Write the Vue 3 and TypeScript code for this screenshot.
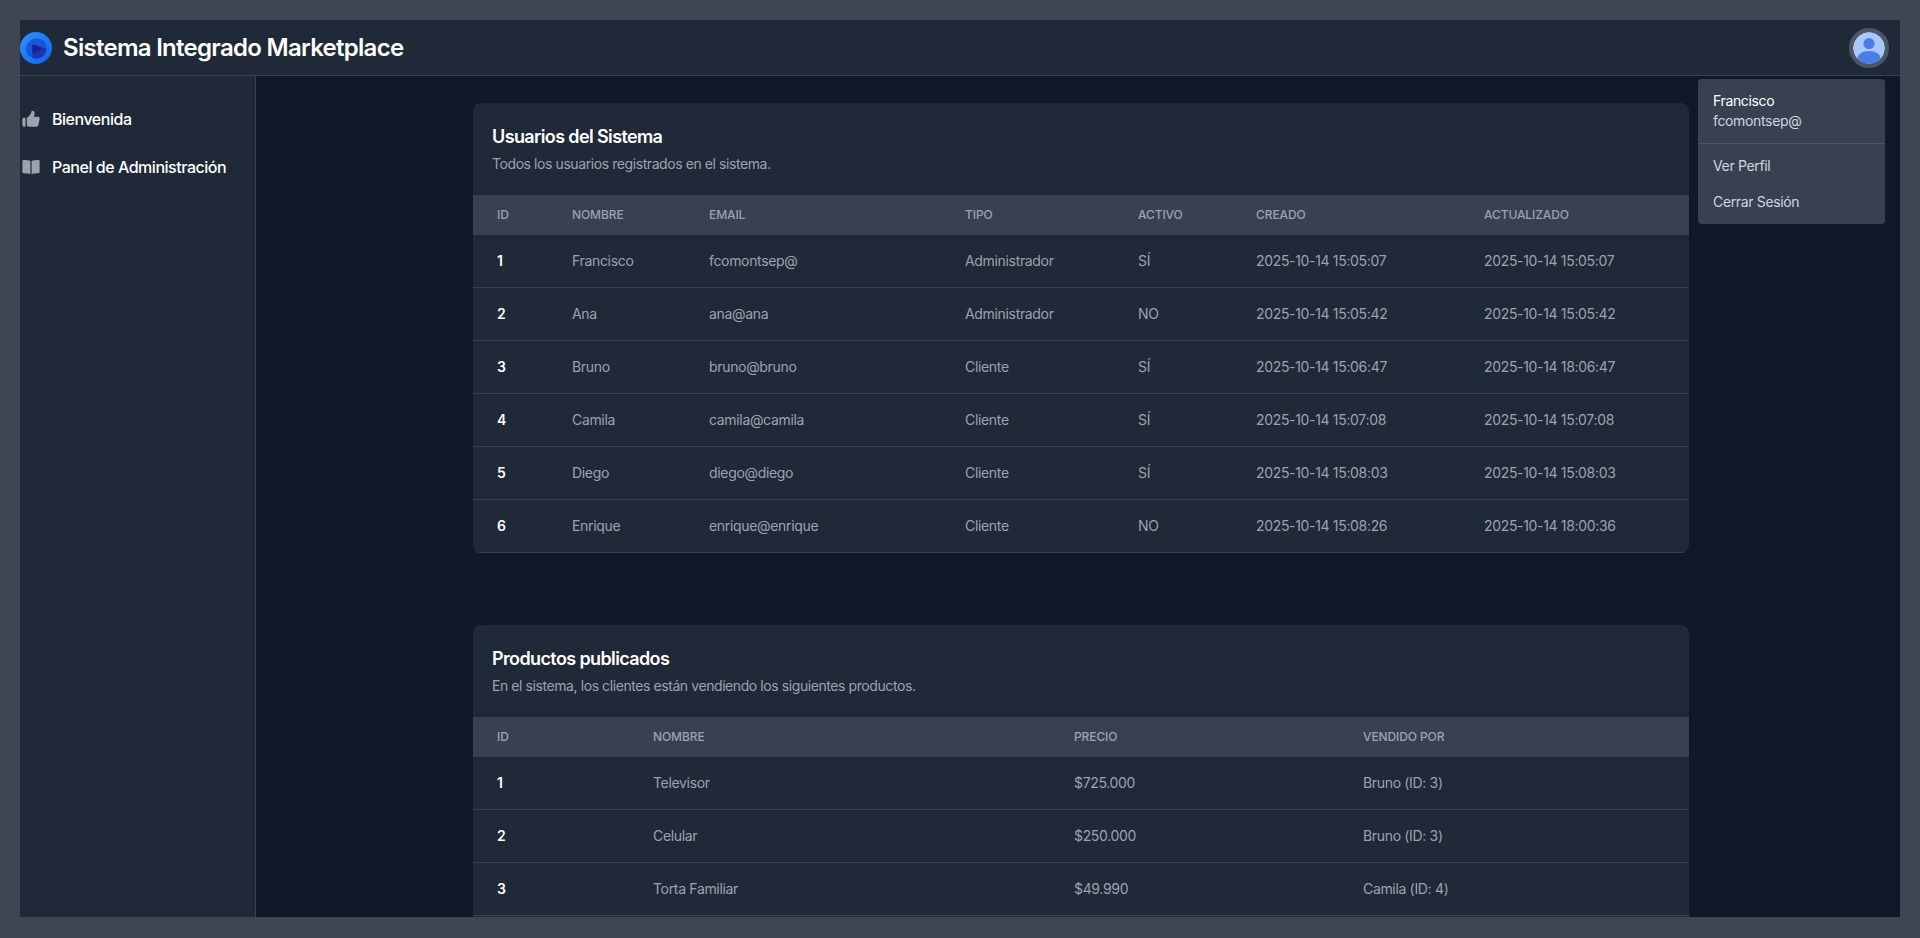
<script setup lang="ts">
interface Table {
  title: string
  subtitle: string
  cols: { label: string; width: number }[]
  rows: string[][]
}

const tables: Table[] = [
  {
    title: 'Usuarios del Sistema',
    subtitle: 'Todos los usuarios registrados en el sistema.',
    cols: [
      { label: 'ID', width: 75 },
      { label: 'Nombre', width: 137 },
      { label: 'Email', width: 256 },
      { label: 'Tipo', width: 173 },
      { label: 'Activo', width: 118 },
      { label: 'Creado', width: 228 },
      { label: 'Actualizado', width: 229 },
    ],
    rows: [
      ['1', 'Francisco', 'fcomontsep@', 'Administrador', 'SÍ', '2025-10-14 15:05:07', '2025-10-14 15:05:07'],
      ['2', 'Ana', 'ana@ana', 'Administrador', 'NO', '2025-10-14 15:05:42', '2025-10-14 15:05:42'],
      ['3', 'Bruno', 'bruno@bruno', 'Cliente', 'SÍ', '2025-10-14 15:06:47', '2025-10-14 18:06:47'],
      ['4', 'Camila', 'camila@camila', 'Cliente', 'SÍ', '2025-10-14 15:07:08', '2025-10-14 15:07:08'],
      ['5', 'Diego', 'diego@diego', 'Cliente', 'SÍ', '2025-10-14 15:08:03', '2025-10-14 15:08:03'],
      ['6', 'Enrique', 'enrique@enrique', 'Cliente', 'NO', '2025-10-14 15:08:26', '2025-10-14 18:00:36'],
    ],
  },
  {
    title: 'Productos publicados',
    subtitle: 'En el sistema, los clientes están vendiendo los siguientes productos.',
    cols: [
      { label: 'ID', width: 156 },
      { label: 'Nombre', width: 421 },
      { label: 'Precio', width: 289 },
      { label: 'Vendido por', width: 350 },
    ],
    rows: [
      ['1', 'Televisor', '$725.000', 'Bruno (ID: 3)'],
      ['2', 'Celular', '$250.000', 'Bruno (ID: 3)'],
      ['3', 'Torta Familiar', '$49.990', 'Camila (ID: 4)'],
      ['', '', '', ''],
    ],
  },
]
</script>

<template>
  <div class="frame">
    <header class="topbar">
      <div class="brand">
        <svg class="logo" viewBox="0 0 32 32" aria-hidden="true">
          <defs>
            <linearGradient id="lg" x1="0" y1="0" x2="1" y2="1">
              <stop offset="0" stop-color="#2f93ff" />
              <stop offset="1" stop-color="#0f62ec" />
            </linearGradient>
          </defs>
          <circle cx="16" cy="16" r="16" fill="url(#lg)" />
          <path d="M6 17C6 11 11 6.500 17 6.500c3.500 0 6.500 1.500 8.500 4L26.500 16.500c0 5.500-4.500 10-10 10-1.500 0-2.800-.3-4-.8C8.500 24 6 21 6 17z" fill="#1a55dc" />
          <path d="M12.500 12.500L26.500 16.500c0 5.500-4.500 10-10 10-1.500 0-2.800-.3-4-.8z" fill="#1c33b4" />
          <path d="M12.500 12.500L22.500 16 12.500 21.500z" fill="#13228f" />
        </svg>
        <span class="brand-name">Sistema Integrado Marketplace</span>
      </div>
      <div class="avatar">
        <svg viewBox="0 0 32 32" aria-hidden="true">
          <circle cx="16" cy="16" r="16" fill="#a8c7fa" />
          <circle cx="16" cy="11.500" r="5.500" fill="#4a7de6" />
          <path d="M4.500 27c0-5 5-8 11.500-8s11.500 3 11.500 8c-3 3-7 5-11.500 5s-8.500-2-11.500-5z" fill="#4a7de6" />
        </svg>
      </div>
      <div class="menu">
        <div class="menu-head">
          <div class="menu-name">Francisco</div>
          <div class="menu-mail">fcomontsep@</div>
        </div>
        <ul class="menu-list">
          <li>Ver Perfil</li>
          <li>Cerrar Sesión</li>
        </ul>
      </div>
    </header>

    <div class="body">
      <aside class="sidebar">
        <a class="nav-item">
          <svg class="nav-icon" viewBox="0 0 24 24" aria-hidden="true">
            <path d="M0.500 12a1.800 1.800 0 0 1 1.800-1.800h1.400a1 1 0 0 1 1 1v10a1 1 0 0 1-1 1H2.300A1.800 1.800 0 0 1 .5 20.400z" />
            <path d="M6.500 10.800c2-1.400 4.200-3.600 5.200-6 .6-1.400.6-3.300 2.100-3.700 1.800-.4 3.100 1.300 3.100 3.200 0 1.700-.6 3.200-1.300 4.700h5.700c1.500 0 2.600 1.400 2.300 2.900l-1.800 8c-.3 1.300-1.500 2.300-2.900 2.300H10.500c-1.700 0-3-.5-4-1.200z" />
          </svg>
          <span>Bienvenida</span>
        </a>
        <a class="nav-item">
          <svg class="nav-icon" viewBox="0 0 24 24" aria-hidden="true">
            <path d="M11.200 4C9 3.200 6 2.800 2 2.800A1.500 1.500 0 0 0 .5 4.300v14.400A1.500 1.500 0 0 0 2 20.200c4 0 7 .4 9.200 1.300z" />
            <path d="M12.800 4C15 3.200 18 2.800 22 2.800a1.500 1.500 0 0 1 1.500 1.500v14.400a1.500 1.500 0 0 1-1.500 1.500c-4 0-7 .4-9.200 1.300z" />
          </svg>
          <span>Panel de Administración</span>
        </a>
      </aside>

      <main class="main">
        <section v-for="t in tables" :key="t.title" class="card">
          <div class="card-head">
            <h2>{{ t.title }}</h2>
            <p>{{ t.subtitle }}</p>
          </div>
          <table>
            <colgroup>
              <col v-for="c in t.cols" :key="c.label" :style="{ width: c.width + 'px' }" />
            </colgroup>
            <thead>
              <tr>
                <th v-for="c in t.cols" :key="c.label">{{ c.label }}</th>
              </tr>
            </thead>
            <tbody>
              <tr v-for="(r, n) in t.rows" :key="n">
                <td v-for="(v, i) in r" :key="i" :class="{ idc: i === 0 }">{{ v }}</td>
              </tr>
            </tbody>
          </table>
        </section>
      </main>
    </div>
  </div>
</template>

<style scoped>
.frame {
  box-sizing: border-box;
  height: 938px;
  padding: 20px 20px 21px;
  background: #3f4651;
  display: flex;
  flex-direction: column;
  overflow: hidden;
  font-family: Inter, "Noto Sans", sans-serif;
  color: #fff;
}
.topbar {
  position: relative;
  flex: none;
  height: 56px;
  box-sizing: border-box;
  background: #1f2937;
  border-bottom: 1px solid #374151;
  display: flex;
  align-items: center;
  justify-content: space-between;
  padding-right: 11px;
}
.brand { display: flex; align-items: center; gap: 11px; }
.logo { width: 32px; height: 32px; display: block; }
.brand-name { font-size: 24px; font-weight: 600; letter-spacing: -0.72px; }
.avatar {
  width: 40px;
  height: 40px;
  box-sizing: border-box;
  border: 4px solid #4b5563;
  border-radius: 50%;
  overflow: hidden;
}
.avatar svg { display: block; width: 32px; height: 32px; }
.menu {
  position: absolute;
  z-index: 2;
  top: 59px;
  right: 15px;
  width: 187px;
  background: #374151;
  border-radius: 4px;
  font-size: 14px;
  line-height: 20px;
}
.menu-head {
  padding: 12px 15px;
  border-bottom: 1px solid #4b5563;
}
.menu-name { color: #fff; letter-spacing: -0.35px; }
.menu-mail { color: #d1d5db; letter-spacing: -0.35px; }
.menu-list { list-style: none; margin: 0; padding: 4px 0; }
.menu-list li { padding: 8px 15px; color: #d1d5db; height: 20px; letter-spacing: -0.35px; }
.body { flex: 1; min-height: 0; display: flex; }
.sidebar {
  flex: none;
  width: 236px;
  box-sizing: border-box;
  background: #1f2937;
  border-right: 1px solid #374151;
  padding-top: 23px;
  display: flex;
  flex-direction: column;
  gap: 8px;
}
.nav-item {
  display: flex;
  align-items: center;
  gap: 12px;
  height: 40px;
  font-size: 16px;
  font-weight: 500;
  letter-spacing: -0.47px;
  color: #fff;
}
.nav-icon { width: 18px; height: 18px; margin-left: 2px; fill: #9ca3af; display: block; flex: none; }
.main {
  flex: 1;
  min-width: 0;
  background: #111827;
  overflow: hidden;
  padding: 27px 0 0 217px;
  display: flex;
  flex-direction: column;
  gap: 72px;
}
.card {
  flex: none;
  width: 1216px;
  background: #1f2937;
  border-radius: 8px;
  overflow: hidden;
}
.card-head { padding: 20px 19px 0; height: 92px; box-sizing: border-box; }
h2 {
  margin: 0;
  font-size: 18px;
  line-height: 28px;
  font-weight: 600;
  letter-spacing: -0.62px;
  color: #fff;
}
.card-head p {
  margin: 3px 0 0;
  font-size: 14px;
  line-height: 20px;
  color: #9ca3af;
  letter-spacing: -0.42px;
}
table {
  width: 100%;
  border-collapse: separate;
  border-spacing: 0;
  table-layout: fixed;
  font-size: 14px;
}
th {
  background: #374151;
  height: 40px;
  box-sizing: border-box;
  padding: 0 24px 1px;
  text-align: left;
  font-size: 12px;
  font-weight: 500;
  color: #9ca3af;
  text-transform: uppercase;
  letter-spacing: -0.1px;
}
td {
  height: 53px;
  padding: 0 24px 2px;
  color: #9ca3af;
  box-sizing: border-box;
  border-bottom: 1px solid #374151;
  letter-spacing: -0.33px;
  white-space: nowrap;
}
td.idc { color: #fff; font-weight: 600; }
</style>

<style>
html, body { background: #3f4651; overflow: hidden; }
</style>
